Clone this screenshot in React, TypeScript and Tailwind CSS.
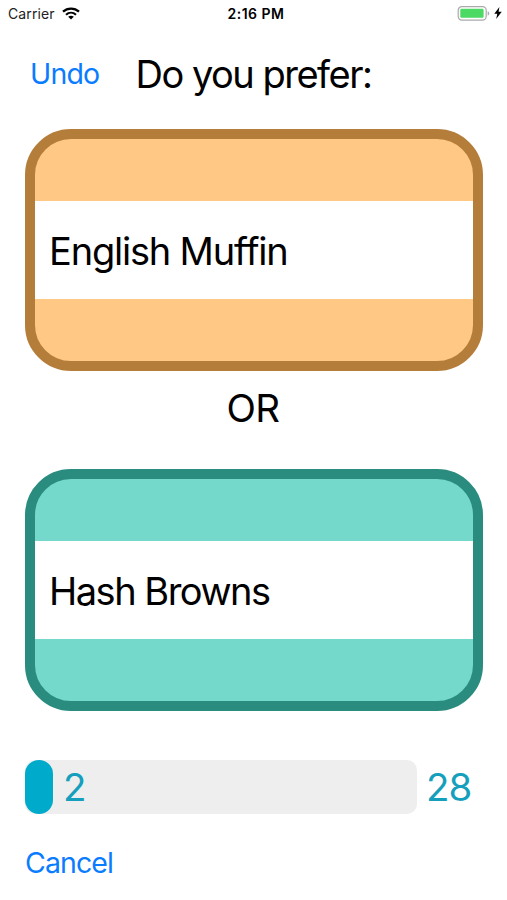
type CardProps = { label: string; frame: string };

function StatusBar() {
  return (
    <div className="mb-0.5 grid h-[26px] grid-cols-3 items-center pl-2 pr-[5px] text-[14px]">
      <div className="flex items-center gap-[7px]">
        <span className="tracking-[0.1px] text-[#222]">Carrier</span>
        <svg width="18" height="13" viewBox="0 0 18 13" fill="none" stroke="#000">
          <path d="M1 4.6C5.5 .5 12.5 .5 17 4.6" strokeWidth="2.3" />
          <path d="M4 7.7C6.9 5.1 11.1 5.1 14 7.7" strokeWidth="2.2" />
          <path d="M9 12.5L6.2 9.8C7.8 8.5 10.2 8.5 11.8 9.8Z" fill="#000" stroke="none" />
        </svg>
      </div>
      <span className="whitespace-nowrap pl-[2px] text-center font-semibold tracking-[0.5px]">2:16 PM</span>
      <div className="flex items-center justify-end gap-1">
        <svg width="33" height="15" viewBox="0 0 33 15">
          <rect x="1.2" y="0.7" width="28" height="13.4" rx="3.6" fill="#fff" stroke="#aaa" strokeWidth="1.2" />
          <rect x="3.3" y="2.8" width="23.3" height="9" rx="1.3" fill="#4cd964" />
          <path d="M30.7 5.2C32.8 5.9 32.8 8.9 30.7 9.6Z" fill="#aaa" />
        </svg>
        <svg width="8" height="12" viewBox="0 0 8 12">
          <path d="M5.4 0L.3 6.8H3.3L2.2 12L7.7 4.8H4.6Z" fill="#000" />
        </svg>
      </div>
    </div>
  );
}

function ChoiceCard({ label, frame }: CardProps) {
  return (
    <button className={`flex h-[242px] w-full items-center rounded-[46px] border-[10px] text-left ${frame}`}>
      <span className="flex h-[98px] w-full items-center bg-white pl-[14px] pt-[2px] text-[38px]">{label}</span>
    </button>
  );
}

export default function App() {
  return (
    <main className="flex h-[900px] w-[507px] flex-col overflow-hidden bg-white font-['Inter','Liberation_Sans',sans-serif] text-black">
      <StatusBar />
      <header className="flex h-[101px] items-start pl-[30px] pt-[17px]">
        <button className="mt-[4px] w-[105.5px] text-left text-[28.5px] leading-[50px] tracking-[-0.8px] text-[#0a7cff]">Undo</button>
        <h1 className="whitespace-nowrap text-[38px] leading-[58px] tracking-[-1.5px]">Do you prefer:</h1>
      </header>
      <section className="flex flex-col pl-[25px] pr-[24px]">
        <ChoiceCard label="English Muffin" frame="border-[#b57d3a] bg-[#ffc885] tracking-[-1.2px]" />
        <div className="h-[98px] pr-[2px] pt-[8px] text-center text-[38.5px] leading-[58px] tracking-[-0.7px]">OR</div>
        <ChoiceCard label="Hash Browns" frame="border-[#298c7e] bg-[#74d8ca] tracking-[-1.5px]" />
      </section>
      <div className="mt-[49px] flex h-[54px] items-center pl-[25px] text-[38.5px] text-[#159fbd]">
        <div className="flex h-full w-[392px] items-center rounded-[10px] bg-[#eee]">
          <div className="h-full w-[28px] rounded-[14px] bg-[#00aacb]" />
          <span className="ml-[10px] pt-[2px]">2</span>
        </div>
        <span className="ml-[9px] pt-[2px] tracking-[-1px]">28</span>
      </div>
      <button className="ml-[25px] mt-[24px] self-start text-[28.5px] leading-[50px] tracking-[-0.9px] text-[#0a7cff]">Cancel</button>
    </main>
  );
}
